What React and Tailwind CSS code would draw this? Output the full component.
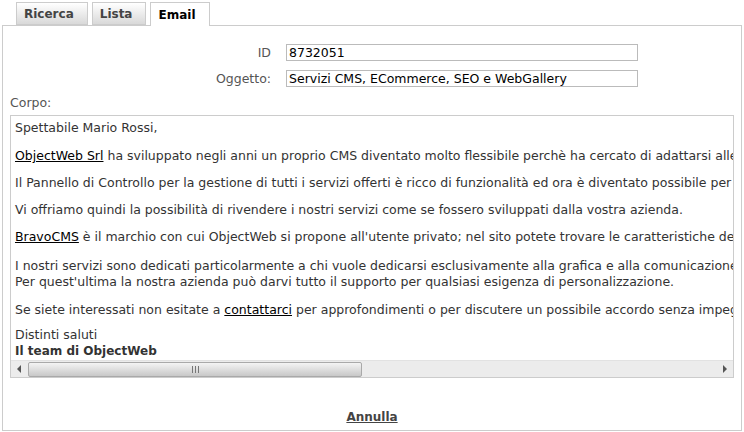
import React from "react";

const font = { fontFamily: '"DejaVu Sans", Verdana, sans-serif' };

function Tab({ label, active }) {
  return active ? (
    <div className="relative z-10 h-[24px] -mb-px border border-b-0 border-[#cccccc] bg-white pl-[7px] pr-[13px] flex items-center text-[12px] font-bold text-black">
      {label}
    </div>
  ) : (
    <div className="h-[23px] border border-[#cccccc] bg-gradient-to-b from-white to-[#d9d9d9] pl-[7px] pr-[13px] flex items-center text-[12px] font-bold text-[#444]">
      {label}
    </div>
  );
}

function Link({ children }) {
  return <span className="underline text-black">{children}</span>;
}

export default function App() {
  return (
    <div className="w-[744px] h-[432px] bg-white overflow-hidden text-[#333]" style={font}>
      <div className="pl-[16px] pt-[2px] flex gap-[4px] items-end">
        <Tab label="Ricerca" />
        <Tab label="Lista" />
        <Tab label="Email" active />
      </div>
      <div className="mx-[2px] w-[740px] h-[406px] border border-[#cccccc] flex flex-col">
        <div className="pt-[18px] flex flex-col gap-[9px]">
          <div className="flex items-center h-[17px]">
            <div className="w-[268px] text-right text-[12.5px] leading-[16px] text-[#555]">ID</div>
            <div className="ml-[15px] w-[352px] h-[17px] border border-[#bbbbbb] bg-white text-[12.5px] text-black leading-[15px] pl-[2px]">8732051</div>
          </div>
          <div className="flex items-center h-[17px]">
            <div className="w-[268px] text-right text-[12.5px] leading-[16px] text-[#555]">Oggetto:</div>
            <div className="ml-[15px] w-[352px] h-[17px] border border-[#bbbbbb] bg-white text-[12.5px] text-black leading-[15px] pl-[2px]">Servizi CMS, ECommerce, SEO e WebGallery</div>
          </div>
        </div>
        <div className="pl-[7px] mt-[8px] text-[12.5px] text-[#555] leading-[16px]">Corpo:</div>
        <div className="ml-[7px] mt-[4px] w-[724px] h-[263px] border border-[#cccccc] flex flex-col">
          <div className="flex-1 overflow-hidden whitespace-nowrap pl-[4px] pt-[4px] text-[12.5px] leading-[16px] text-[#333]">
            <p className="mb-[12px]">Spettabile Mario Rossi,</p>
            <p className="mb-[11px]"><Link>ObjectWeb Srl</Link> ha sviluppato negli anni un proprio CMS diventato molto flessibile perchè ha cercato di adattarsi alle esigenze dei clienti.</p>
            <p className="mb-[11px]">Il Pannello di Controllo per la gestione di tutti i servizi offerti è ricco di funzionalità ed ora è diventato possibile per chiunque.</p>
            <p className="mb-[11px]">Vi offriamo quindi la possibilità di rivendere i nostri servizi come se fossero sviluppati dalla vostra azienda.</p>
            <p className="mb-[13px]"><Link>BravoCMS</Link> è il marchio con cui ObjectWeb si propone all'utente privato; nel sito potete trovare le caratteristiche dei servizi.</p>
            <p className="mb-[12px]">I nostri servizi sono dedicati particolarmente a chi vuole dedicarsi esclusivamente alla grafica e alla comunicazione.<br />Per quest'ultima la nostra azienda può darvi tutto il supporto per qualsiasi esigenza di personalizzazione.</p>
            <p className="mb-[9px]">Se siete interessati non esitate a <Link>contattarci</Link> per approfondimenti o per discutere un possibile accordo senza impegno.</p>
            <p>Distinti saluti<br /><span className="font-bold text-[12px]">Il team di ObjectWeb</span></p>
          </div>
          <div className="h-[17px] bg-[#ececec] border-t border-[#e2e2e2] flex items-center">
            <div className="w-[17px] h-full flex items-center justify-center">
              <svg width="5" height="8" viewBox="0 0 5 8"><path d="M4 0 L0 4 L4 8 Z" fill="#555" /></svg>
            </div>
            <div className="w-[334px] h-[15px] rounded-[2px] border border-[#a9a9a9] bg-gradient-to-b from-[#f4f4f4] via-[#dedede] to-[#c8c8c8] flex items-center justify-center">
              <svg width="7" height="7" viewBox="0 0 7 7"><path d="M0.5 0 V7 M3.5 0 V7 M6.5 0 V7" stroke="#777" strokeWidth="1" /></svg>
            </div>
            <div className="flex-1" />
            <div className="w-[17px] h-full flex items-center justify-center">
              <svg width="5" height="8" viewBox="0 0 5 8"><path d="M1 0 L5 4 L1 8 Z" fill="#555" /></svg>
            </div>
          </div>
        </div>
        <div className="flex-1 flex items-end justify-center pb-[4px]">
          <span className="text-[12px] font-bold underline text-[#444]">Annulla</span>
        </div>
      </div>
    </div>
  );
}
